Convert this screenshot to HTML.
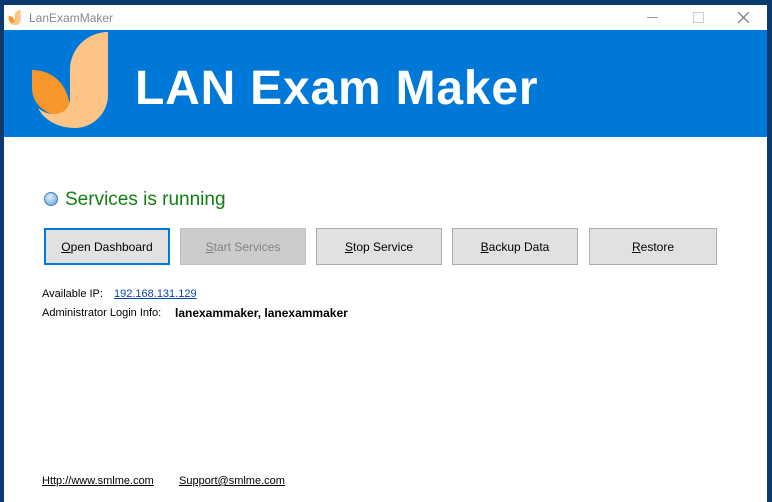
<!DOCTYPE html>
<html><head><style>
body{margin:0;width:772px;height:502px;overflow:hidden;background:#0b3a6e;font-family:"Liberation Sans","DejaVu Sans",sans-serif;position:relative}
.win{position:absolute;left:4px;top:5px;width:763px;height:497px;background:#fff}
.title{position:absolute;left:0;top:0;width:763px;height:25px;background:#fff}
.title span{position:absolute;left:25px;top:6px;font-size:12px;color:#888}
.hdr{position:absolute;left:0;top:25px;width:763px;height:107px;background:#0078d7}
.hdr h1{position:absolute;left:131px;top:31px;margin:0;font-size:48px;color:#fff;font-weight:bold;letter-spacing:0.8px}
.btn{position:absolute;top:223px;width:126px;height:37px;background:#e1e1e1;border:1px solid #adadad;font-size:12px;text-align:center;line-height:37px;color:#000;box-sizing:border-box}
.f{position:absolute;font-size:11px;color:#000}
</style></head><body>
<div class="win">
<div class="title">
<svg style="position:absolute;left:4px;top:4px" width="13" height="17" viewBox="28 30 82 100"><path d="M32,70 C55,70 72,88 70,117 C48,118 32,105 32,88 Z" fill="#f7962b"/><path d="M108,32 L108,95 C108,113 93,128 75,128 C58,128 44,120 38,108 C50,118 68,116 70,100 L70,70 C70,48 88,32 108,32Z" fill="#fcc587"/></svg>
<span>LanExamMaker</span>
<div style="position:absolute;left:643px;top:12px;width:11px;height:1px;background:#999"></div>
<div style="position:absolute;left:689px;top:7px;width:9px;height:9px;border:1px solid #ccc"></div>
<svg style="position:absolute;left:734px;top:7px" width="11" height="11"><path d="M0 0L11 11M11 0L0 11" stroke="#777" stroke-width="1.2"/></svg>
</div>
<div class="hdr">
<svg style="position:absolute;left:-4px;top:-30px" width="120" height="140" viewBox="0 0 120 140"><path d="M32,70 C55,70 72,88 70,117 C48,118 32,105 32,88 Z" fill="#f7962b"/><path d="M108,32 L108,95 C108,113 93,128 75,128 C58,128 44,120 38,108 C50,118 68,116 70,100 L70,70 C70,48 88,32 108,32Z" fill="#fcc587"/></svg>
<h1>LAN Exam Maker</h1>
</div>
<div style="position:absolute;left:40px;top:187px;width:12px;height:12px;border-radius:50%;background:radial-gradient(circle at 40% 35%,#e0f0ff,#5aa0e0);border:1px solid #4a7fb5"></div>
<div style="position:absolute;left:61px;top:184px;font-size:19px;color:#108010">Services is running</div>
<div class="btn" style="left:40px;border:2px solid #0078d7;line-height:35px"><u>O</u>pen Dashboard</div>
<div class="btn" style="left:176px;background:#cccccc;border-color:#bfbfbf;color:#838383"><u>S</u>tart Services</div>
<div class="btn" style="left:312px"><u>S</u>top Service</div>
<div class="btn" style="left:448px"><u>B</u>ackup Data</div>
<div class="btn" style="left:585px;width:128px"><u>R</u>estore</div>
<div class="f" style="left:38px;top:283px">Available IP:</div>
<div class="f" style="left:110px;top:283px;color:#0645ad;text-decoration:underline">192.168.131.129</div>
<div class="f" style="left:38px;top:302px">Administrator Login Info:</div>
<div class="f" style="left:171px;top:301px;font-weight:bold;font-size:12px">lanexammaker, lanexammaker</div>
<div class="f" style="left:38px;top:470px;text-decoration:underline">Http://www.smlme.com</div>
<div class="f" style="left:175px;top:470px;text-decoration:underline">Support@smlme.com</div>
</div>
</body></html>
